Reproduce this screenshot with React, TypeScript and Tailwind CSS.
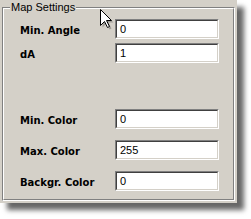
import React from 'react';

const rows = [
  { label: 'Min. Angle', value: '0', mt: 'mt-[10px]' },
  { label: 'dA', value: '1', mt: 'mt-[4px]' },
  { label: 'Min. Color', value: '0', mt: 'mt-[46px]' },
  { label: 'Max. Color', value: '255', mt: 'mt-[11px]' },
  { label: 'Backgr. Color', value: '0', mt: 'mt-[11px]' },
];

const Field: React.FC<{ value: string }> = ({ value }) => (
  // classic sunken edit box: two bevel layers
  <div className="w-[104px] h-[20px] border border-t-[#808080] border-l-[#808080] border-b-white border-r-white">
    <div className="w-full h-full border border-t-[#404040] border-l-[#404040] border-b-[#d4d0c8] border-r-[#d4d0c8] bg-white flex items-center pl-[3px] pt-[1px]">
      <span className="text-[11px] leading-none text-black" style={{ fontFamily: '"Liberation Sans", Arial, sans-serif' }}>
        {value}
      </span>
    </div>
  </div>
);

const Cursor = () => (
  <svg className="absolute left-[100px] top-[9px]" width="16" height="22" viewBox="0 0 16 22">
    <path d="M2.5 2.5 L2.5 18.5 L6.5 14.5 L9.5 20.5 L11.5 19.5 L8.5 13.5 L13.5 13.5 Z" fill="rgba(0,0,0,0.25)" />
    <path d="M0.5 0.5 L0.5 16.5 L4.5 12.5 L7.5 18.5 L9.5 17.5 L6.5 11.5 L11.5 11.5 Z" fill="white" stroke="black" strokeWidth="1" strokeLinejoin="miter" />
  </svg>
);

export default function App() {
  return (
    <div className="w-[251px] h-[219px] bg-white overflow-hidden">
      <div className="relative w-[237px] h-[203px] bg-[#d4d0c8] pl-[2px] pt-[7px] shadow-[7px_7px_5px_rgba(0,0,0,0.6)]">
        {/* etched group box */}
        <div className="relative w-[233px] h-[194px] border border-t-[#808080] border-l-[#808080] border-b-white border-r-white">
          <div className="w-full h-full border border-t-white border-l-white border-b-[#808080] border-r-[#808080] pl-[16px]">
            {rows.map((r) => (
              <div key={r.label} className={`flex items-start ${r.mt}`}>
                <div
                  className="w-[95px] pt-[6px] text-[10px] leading-[12px] font-bold text-black whitespace-nowrap"
                  style={{ fontFamily: '"DejaVu Sans", Verdana, sans-serif' }}
                >
                  {r.label}
                </div>
                <Field value={r.value} />
              </div>
            ))}
          </div>
          <span
            className="absolute left-[7px] top-[-7px] px-[1px] bg-[#d4d0c8] text-[11px] leading-[13px] text-black"
            style={{ fontFamily: '"Liberation Sans", Arial, sans-serif' }}
          >
            Map Settings
          </span>
        </div>
        <Cursor />
      </div>
    </div>
  );
}
